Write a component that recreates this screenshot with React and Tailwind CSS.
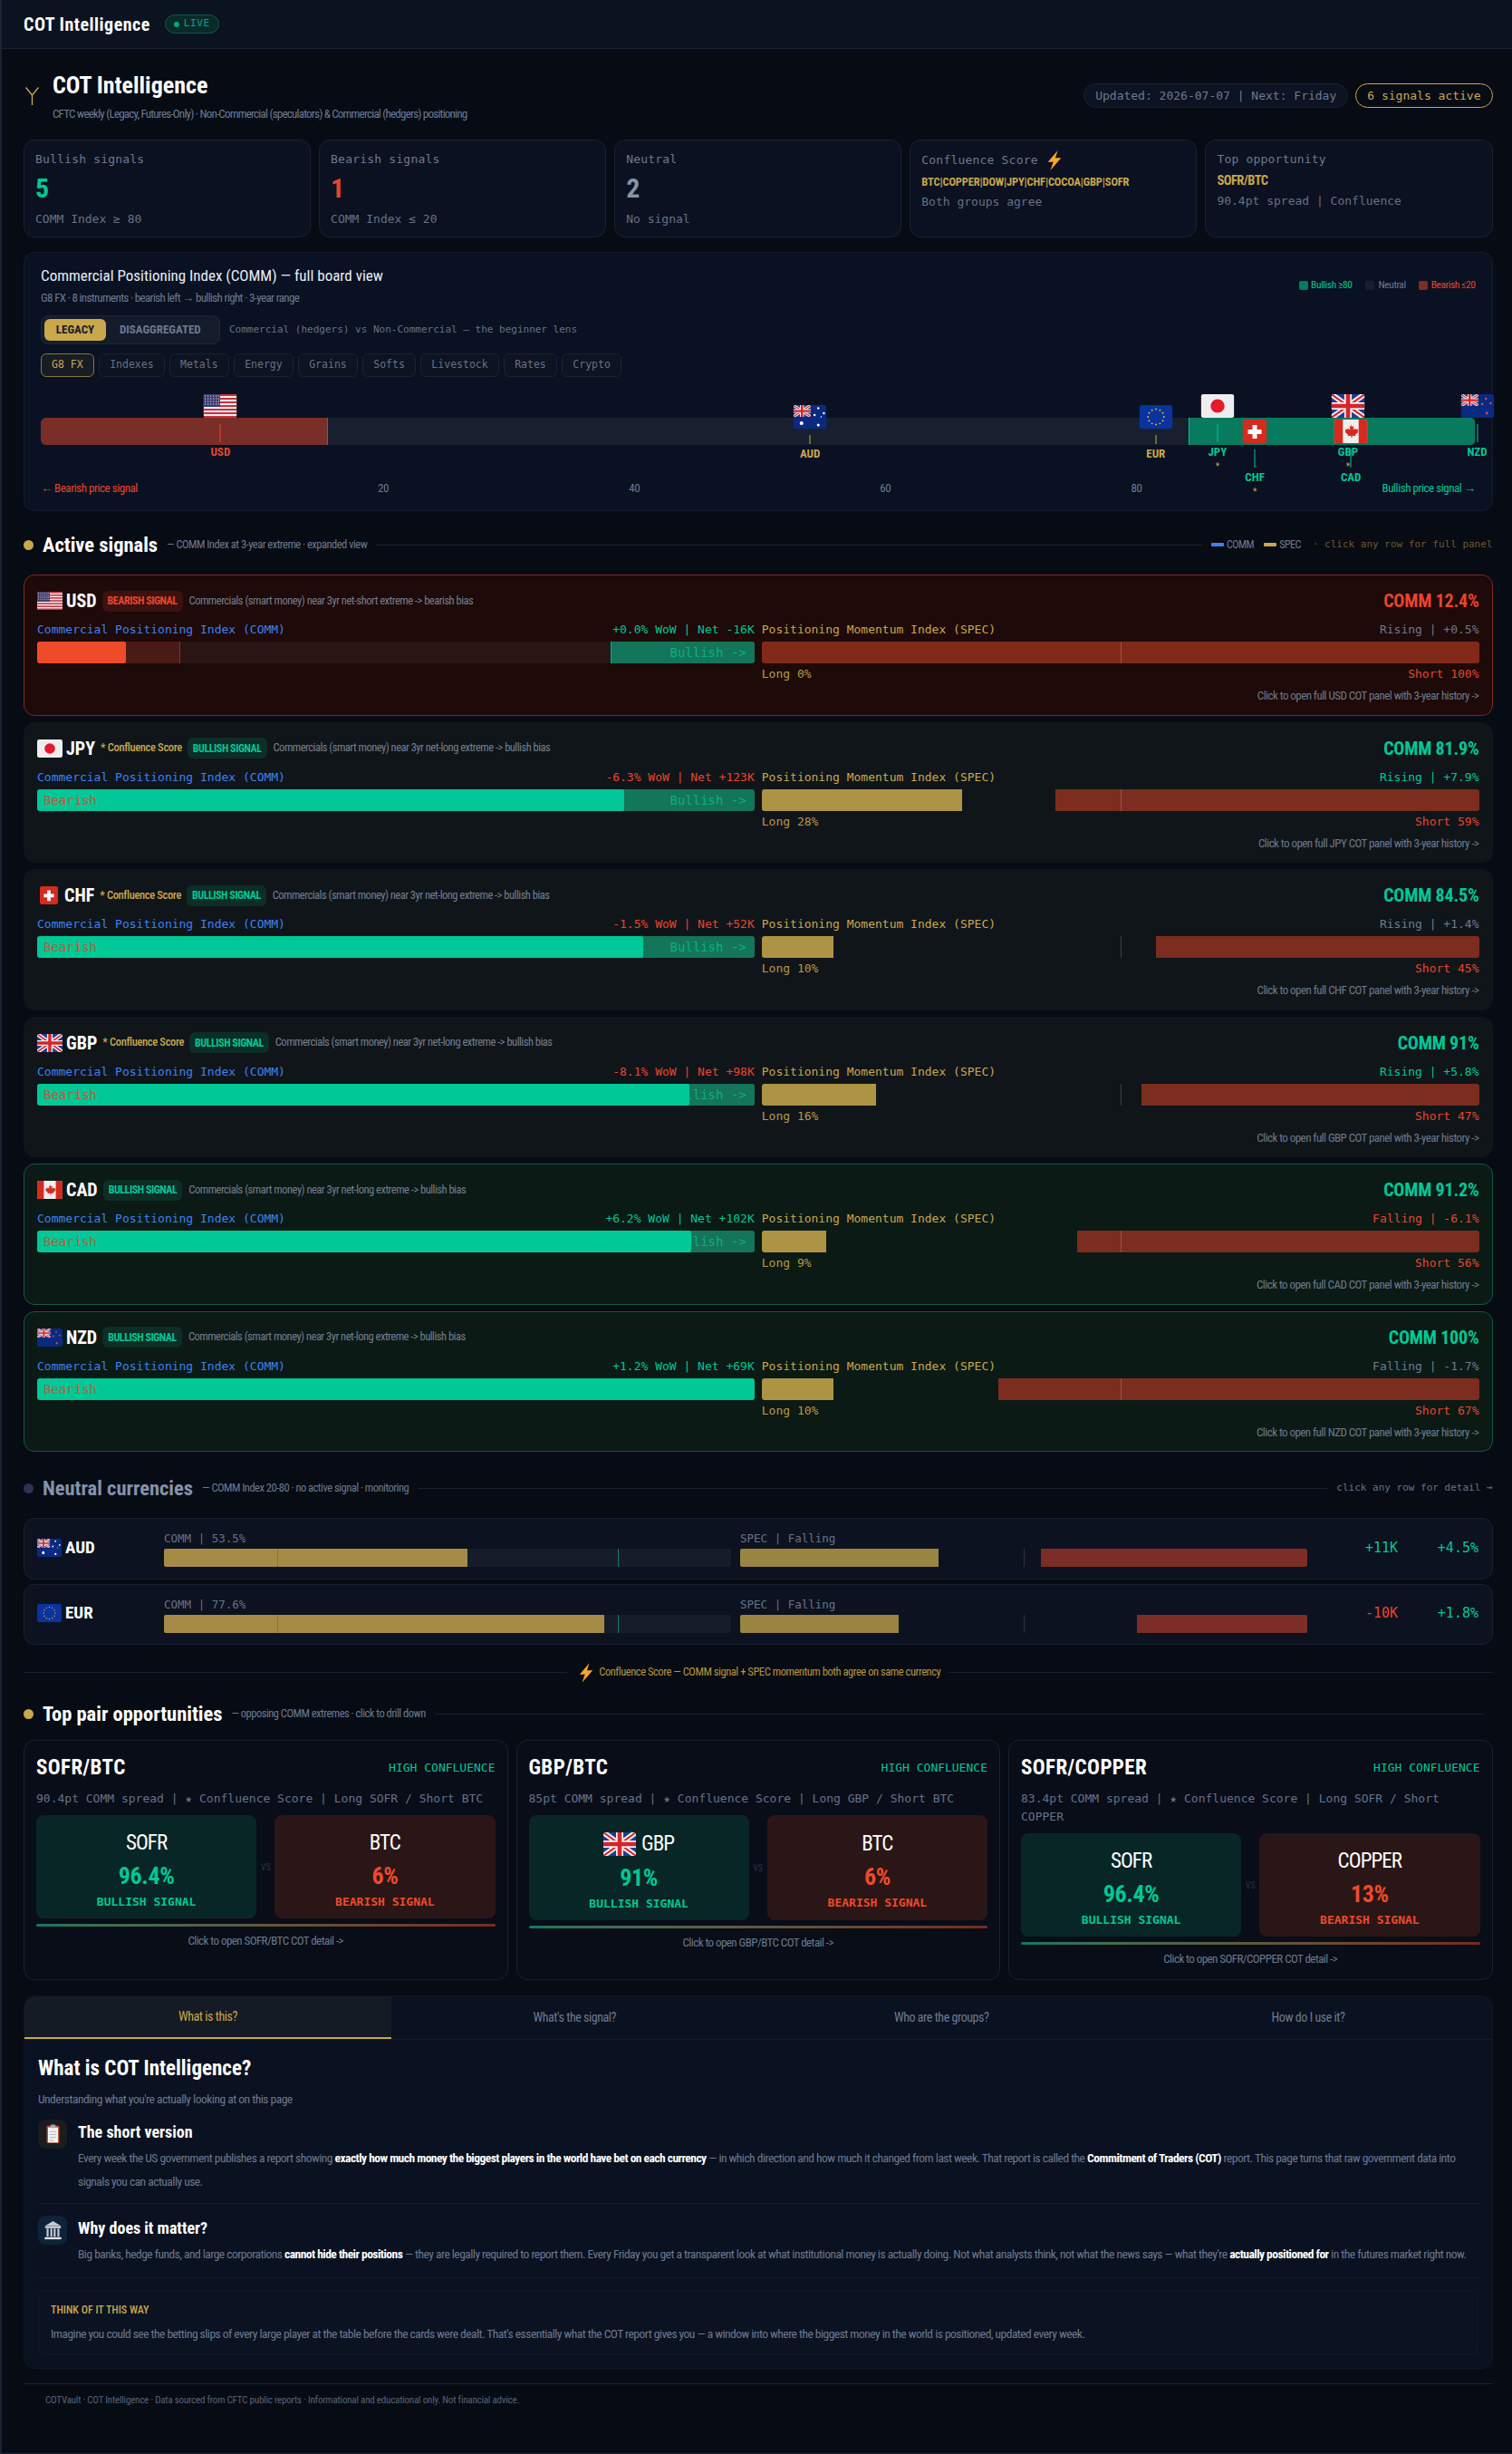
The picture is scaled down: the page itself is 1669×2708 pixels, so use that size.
import React from 'react';

// COT Intelligence dashboard
const MONO = "font-['DejaVu_Sans_Mono','Noto_Sans_Mono',monospace]";
const SANS = "font-['Roboto_Condensed','Liberation_Sans',sans-serif]";

const UnionJack = () => (
  <g>
    <rect width="36" height="26" fill="#1f3a93" />
    <path d="M0 0L36 26M36 0L0 26" stroke="#f0f0f0" strokeWidth="6" />
    <path d="M0 0L36 26M36 0L0 26" stroke="#d8232a" strokeWidth="2" />
    <path d="M18 0V26M0 13H36" stroke="#f0f0f0" strokeWidth="8" />
    <path d="M18 0V26M0 13H36" stroke="#d8232a" strokeWidth="4.5" />
  </g>
);

const Flag = ({ code, className = 'w-[37px] h-[26px]' }) => {
  if (code === 'CHF') {
    return (
      <svg viewBox="0 0 27 26" className={className} preserveAspectRatio="none">
        <rect width="27" height="26" rx="3" fill="#d52b1e" />
        <path d="M11 6h5v5h5v5h-5v5h-5v-5H6v-5h5z" fill="#fff" />
      </svg>
    );
  }
  return (
    <svg viewBox="0 0 36 26" className={className} preserveAspectRatio="none">
      <defs>
        <clipPath id={`clip-${code}`}>
          <rect width="36" height="26" rx="3" />
        </clipPath>
      </defs>
      <g clipPath={`url(#clip-${code})`}>
        {code === 'USD' && (
          <g>
            <rect width="36" height="26" fill="#eeeeee" />
            {[0, 4, 8, 12, 16, 20, 24].map(y => (
              <rect key={y} y={y} width="36" height="2" fill="#c8313e" />
            ))}
            <rect width="18" height="14" fill="#3c3b6e" />
            {[2, 5, 8, 11].map(y =>
              [2, 5, 8, 11, 14, 16.5].map(x => <circle key={`${x}-${y}`} cx={x} cy={y} r="0.7" fill="#cfcfe0" />)
            )}
          </g>
        )}
        {code === 'JPY' && (
          <g>
            <rect width="36" height="26" fill="#eeeeee" />
            <circle cx="18" cy="13" r="7.5" fill="#e8192c" />
          </g>
        )}
        {code === 'GBP' && <UnionJack />}
        {code === 'CAD' && (
          <g>
            <rect width="36" height="26" fill="#eeeeee" />
            <rect width="9.5" height="26" fill="#d52b1e" />
            <rect x="26.5" width="9.5" height="26" fill="#d52b1e" />
            <path d="M18 5l1.6 3 1.8-1-.8 4.4 2.4-2 .6 1.6 2.6-.4-.8 2.6 1 .6-3.6 3 .4 1.4-3.6-.4V20h-1.2v-2.2l-3.6.4.4-1.4-3.6-3 1-.6-.8-2.6 2.6.4.6-1.6 2.4 2-.8-4.4 1.8 1z" fill="#d52b1e" />
          </g>
        )}
        {(code === 'AUD' || code === 'NZD') && (
          <g>
            <rect width="36" height="26" fill="#0a2a82" />
            <svg x="0" y="0" width="19" height="13" viewBox="0 0 36 26" preserveAspectRatio="none">
              <UnionJack />
            </svg>
            {code === 'AUD'
              ? [[9, 20, 2], [27, 3.5, 1.2], [33, 9, 1.2], [23, 11, 1.2], [27, 22, 1.5], [30, 13, 0.7]].map(([x, y, r]) => (
                  <circle key={`${x}-${y}`} cx={x} cy={y} r={r} fill="#fff" />
                ))
              : [[27, 5, 1.2], [32, 10, 1.2], [23, 11, 1.2], [28, 21, 1.4]].map(([x, y, r]) => (
                  <circle key={`${x}-${y}`} cx={x} cy={y} r={r} fill="#d84a50" />
                ))}
          </g>
        )}
        {code === 'EUR' && (
          <g>
            <rect width="36" height="26" fill="#0a33a0" />
            {Array.from({ length: 12 }).map((_, i) => (
              <circle
                key={i}
                cx={18 + 8.5 * Math.cos((i * Math.PI) / 6)}
                cy={13 + 8.5 * Math.sin((i * Math.PI) / 6)}
                r="0.9"
                fill="#e8c21a"
              />
            ))}
          </g>
        )}
      </g>
    </svg>
  );
};

const Bolt = ({ className }) => (
  <svg viewBox="0 0 20 24" className={className}>
    <path d="M14 0L2 14h6.5L5 24 18 9h-7z" fill="#f9a62b" />
  </svg>
);

const Stat = ({ label, value, valueColor, sub }) => (
  <div className="h-[108px] rounded-xl border border-[#192131] bg-[#0b1120] px-[12px] pt-[11px]">
    <div className={`${MONO} h-[20px] text-[13px] leading-[20px] tracking-[0.2px] text-[#6d7a92]`}>{label}</div>
    <div className={`mt-[8px] h-[28px] text-[30px] font-bold leading-[28px] ${valueColor}`}>{value}</div>
    <div className={`${MONO} mt-[11px] h-[18px] text-[13px] leading-[18px] text-[#667288]`}>{sub}</div>
  </div>
);

const MARKERS = [
  { code: 'USD', pct: 12.4, top: 'mt-0', line: 'h-[20px]', color: 'text-[#e8452c]', bar: 'bg-[#e8452c]' },
  { code: 'AUD', pct: 53.5, top: 'mt-[12px]', line: 'h-[10px]', color: 'text-[#c9a84c]', bar: 'bg-[#c9a84c]' },
  { code: 'EUR', pct: 77.6, top: 'mt-[12px]', line: 'h-[10px]', color: 'text-[#c9a84c]', bar: 'bg-[#c9a84c]' },
  { code: 'JPY', pct: 81.9, top: 'mt-0', line: 'h-[20px]', color: 'text-[#00c896]', bar: 'bg-[#00c896]', star: true },
  { code: 'CHF', pct: 84.5, top: 'mt-[28px]', line: 'h-[20px]', color: 'text-[#00c896]', bar: 'bg-[#00c896]', star: true, narrow: true },
  { code: 'GBP', pct: 91, top: 'mt-0', line: 'h-[20px]', color: 'text-[#00c896]', bar: 'bg-[#00c896]', star: true },
  { code: 'CAD', pct: 91.2, top: 'mt-[28px]', line: 'h-[20px]', color: 'text-[#00c896]', bar: 'bg-[#00c896]' },
  { code: 'NZD', pct: 100, top: 'mt-0', line: 'h-[20px]', color: 'text-[#00c896]', bar: 'bg-[#00c896]' },
];

const BoardMarker = ({ m }) => (
  <div
    className={`absolute top-0 flex -translate-x-1/2 flex-col items-center ${m.top}`}
    style={{ left: `calc(${m.pct}% + 2px)` }}
  >
    <Flag code={m.code} className={m.narrow ? 'h-[26px] w-[27px]' : 'h-[26px] w-[37px]'} />
    <div className={`mt-[7px] w-px ${m.line} ${m.bar}`} />
    <div className={`mt-[3px] h-[16px] text-[13px] font-bold leading-[16px] ${m.color}`}>{m.code}</div>
    {m.star && <div className="h-[16px] text-[10px] leading-[16px] text-[#c9a84c]">*</div>}
  </div>
);

const SectionHeader = ({ dot, title, titleColor = 'text-white', sub, children }) => (
  <div className="flex h-[28px] items-center">
    <div className={`mr-[10px] h-[11px] w-[11px] shrink-0 rounded-full ${dot}`} />
    <div className={`whitespace-nowrap text-[22.5px] font-bold leading-[28px] ${titleColor}`}>{title}</div>
    <div className="ml-[10px] whitespace-nowrap text-[12.5px] tracking-[-0.5px] text-[#6d7a92]">{sub}</div>
    <div className="mx-[10px] h-px flex-1 bg-[#1a2233]" />
    {children}
  </div>
);

const SIGNALS = [
  { code: 'USD', kind: 'bear', comm: 12.4, wow: '+0.0% WoW | Net -16K', wowColor: 'text-[#00c896]', trend: 'Rising | +0.5%', trendColor: 'text-[#6d7a92]', long: 0, short: 100 },
  { code: 'JPY', kind: 'bull', comm: 81.9, wow: '-6.3% WoW | Net +123K', wowColor: 'text-[#e8452c]', trend: 'Rising | +7.9%', trendColor: 'text-[#00c896]', long: 28, short: 59, conf: true },
  { code: 'CHF', kind: 'bull', comm: 84.5, wow: '-1.5% WoW | Net +52K', wowColor: 'text-[#e8452c]', trend: 'Rising | +1.4%', trendColor: 'text-[#6d7a92]', long: 10, short: 45, conf: true, narrow: true },
  { code: 'GBP', kind: 'bull', comm: 91, wow: '-8.1% WoW | Net +98K', wowColor: 'text-[#e8452c]', trend: 'Rising | +5.8%', trendColor: 'text-[#00c896]', long: 16, short: 47, conf: true },
  { code: 'CAD', kind: 'green', comm: 91.2, wow: '+6.2% WoW | Net +102K', wowColor: 'text-[#00c896]', trend: 'Falling | -6.1%', trendColor: 'text-[#e8452c]', long: 9, short: 56 },
  { code: 'NZD', kind: 'green', comm: 100, wow: '+1.2% WoW | Net +69K', wowColor: 'text-[#00c896]', trend: 'Falling | -1.7%', trendColor: 'text-[#6d7a92]', long: 10, short: 67 },
];

const rowTone = {
  bear: 'bg-[#1e0a08] border-[#7a2a1e]',
  bull: 'bg-[#10151a] border-[#10151a]',
  green: 'bg-[#0b1a15] border-[#125a42]',
};

const SignalRow = ({ s }) => {
  const bear = s.kind === 'bear';
  return (
    <div className={`h-[155.5px] rounded-xl border px-[14px] pt-[16px] ${rowTone[s.kind]}`}>
      <div className="flex h-[24px] items-center">
        <Flag code={s.code} className={s.narrow ? 'ml-[3px] mr-[3px] h-[20px] w-[20px]' : 'h-[20px] w-[28px]'} />
        <div className="ml-[4px] text-[20px] font-bold text-white">{s.code}</div>
        {s.conf && (
          <div className="ml-[6px] text-[12.5px] font-medium tracking-[-0.35px] text-[#c9a84c]">* Confluence Score</div>
        )}
        <div
          className={`ml-[6px] flex h-[23px] items-center rounded-md px-[6px] text-[12px] font-bold tracking-[-0.45px] ${
            bear ? 'bg-[#3a1210] text-[#e8452c]' : 'bg-[#0d2d27] text-[#00c896]'
          }`}
        >
          {bear ? 'BEARISH SIGNAL' : 'BULLISH SIGNAL'}
        </div>
        <div className="ml-[7px] text-[12.5px] tracking-[-0.5px] text-[#757f90]">
          Commercials (smart money) near 3yr {bear ? 'net-short extreme -> bearish bias' : 'net-long extreme -> bullish bias'}
        </div>
        <div className={`ml-auto text-[20px] font-bold tracking-[-0.2px] ${bear ? 'text-[#e8452c]' : 'text-[#00c896]'}`}>
          COMM {s.comm}%
        </div>
      </div>
      <div className={`${MONO} mt-[11px] grid grid-cols-2 gap-[8px] text-[13px] leading-[18px]`}>
        <div>
          <div className="flex h-[18px] justify-between">
            <span className="text-[#3b82f6]">Commercial Positioning Index (COMM)</span>
            <span className={s.wowColor}>{s.wow}</span>
          </div>
          <div className={`relative mt-[4px] h-[24px] overflow-hidden rounded-[3px] ${bear ? 'bg-[#2a1414]' : 'bg-[#171d24]'}`}>
            <div className="absolute inset-y-0 left-0 w-[20%] border-r border-[#8a3020] bg-[#4a1a16]" />
            <div className="absolute inset-y-0 right-0 flex w-[20%] items-center justify-end border-l border-[#0fae82] bg-[#13755a] pr-[9px] text-[14px] text-[#0cb07f]">
              {'Bullish ->'}
            </div>
            <div
              className={`absolute inset-y-0 left-0 rounded-r-[2px] ${bear ? 'bg-[#ef4a2a]' : 'bg-[#00c896]'}`}
              style={{ width: `${s.comm}%` }}
            />
            <div className="absolute inset-y-0 left-[7px] flex items-center text-[14px] text-[#c8563a]">
              {!bear && 'Bearish'}
            </div>
          </div>
        </div>
        <div>
          <div className="flex h-[18px] justify-between">
            <span className="text-[#c9a84c]">Positioning Momentum Index (SPEC)</span>
            <span className={s.trendColor}>{s.trend}</span>
          </div>
          <div className="relative mt-[4px] h-[24px] overflow-hidden rounded-[3px]">
            <div className="absolute inset-y-0 left-0 bg-[#ad9444]" style={{ width: `${s.long}%` }} />
            <div className={`absolute inset-y-0 right-0 ${bear ? 'bg-[#822a1a]' : 'bg-[#7c2d20]'}`} style={{ width: `${s.short}%` }} />
            <div className="absolute inset-y-0 left-1/2 w-px bg-[#ffffff30]" />
          </div>
          <div className="mt-[4px] flex h-[16px] justify-between leading-[16px]">
            <span className="text-[#b89a45]">Long {s.long}%</span>
            <span className="text-[#e8452c]">Short {s.short}%</span>
          </div>
        </div>
      </div>
      <div className="mt-[8px] h-[16px] text-right text-[13px] leading-[16px] tracking-[-0.55px] text-[#6d7a8c]">
        {`Click to open full ${s.code} COT panel with 3-year history ->`}
      </div>
    </div>
  );
};

const NeutralRow = ({ code, comm, long, short, net, netColor, chg }) => (
  <div className="flex h-[67.5px] rounded-xl border border-[#182031] bg-[#0c1220] px-[14px]">
    <div className="flex w-[140px] items-center pb-[2px]">
      <Flag code={code} className="h-[20px] w-[27px]" />
      <div className="ml-[4px] text-[19px] font-bold text-white">{code}</div>
    </div>
    <div className="w-[626px] pt-[14px]">
      <div className={`${MONO} h-[16px] text-[12.5px] leading-[16px] text-[#667288]`}>COMM | {comm}%</div>
      <div className="relative mt-[3px] h-[20px] overflow-hidden rounded-[2px] bg-[#161c2a]">
        <div className="absolute inset-y-0 left-0 bg-[#a58b45]" style={{ width: `${comm}%` }} />
        <div className="absolute inset-y-0 left-[20%] w-px bg-[#b5602e]" />
        <div className="absolute inset-y-0 left-[80%] w-px bg-[#0c7f60]" />
      </div>
    </div>
    <div className="ml-[10px] w-[626px] pt-[14px]">
      <div className={`${MONO} h-[16px] text-[12.5px] leading-[16px] text-[#667288]`}>SPEC | Falling</div>
      <div className="relative mt-[3px] h-[20px] overflow-hidden rounded-[2px]">
        <div className="absolute inset-y-0 left-0 bg-[#9a8442]" style={{ width: `${long}%` }} />
        <div className="absolute inset-y-0 right-0 bg-[#7c2d26]" style={{ width: `${short}%` }} />
        <div className="absolute inset-y-0 left-1/2 w-px bg-[#2a3242]" />
      </div>
    </div>
    <div className={`${MONO} flex w-[100px] items-center justify-end pb-[2px] text-[15px] ${netColor}`}>{net}</div>
    <div className={`${MONO} flex w-[89px] items-center justify-end pb-[2px] text-[15px] text-[#00c896]`}>{chg}</div>
  </div>
);

const SideBox = ({ name, value, bull, flag }) => (
  <div className={`flex flex-col items-center justify-center rounded-lg py-[10px] ${bull ? 'bg-[#082625]' : 'bg-[#2a1616]'}`}>
    <div className={`mt-[3px] flex items-center text-[23px] leading-[36px] tracking-[-0.9px] text-white ${flag ? 'h-[38px]' : 'h-[36px]'}`}>
      {flag && <Flag code={flag} className="mr-[6px] h-[26px] w-[36px]" />}
      {name}
    </div>
    <div className={`mt-[1px] h-[34px] text-[26px] font-bold leading-[34px] tracking-[-0.4px] ${bull ? 'text-[#00c896]' : 'text-[#ef4a2a]'}`}>{value}</div>
    <div className={`${MONO} mt-[4px] h-[16px] text-[13px] font-bold leading-[16px] ${bull ? 'text-[#00c896]' : 'text-[#ef4a2a]'}`}>
      {bull ? 'BULLISH SIGNAL' : 'BEARISH SIGNAL'}
    </div>
  </div>
);

const PairCard = ({ pair, spread, a, av, b, bv, flag }) => (
  <div className="rounded-xl border border-[#192131] bg-[#080d18] px-[13px] pt-[16px]">
    <div className="flex h-[28px] items-center justify-between">
      <div className="text-[23px] font-bold tracking-[0.4px] text-white">{pair}</div>
      <div className={`${MONO} text-[13px] text-[#00c896]`}>HIGH CONFLUENCE</div>
    </div>
    <div className={`${MONO} mt-[10px] text-[13px] leading-[20px] text-[#667288]`}>
      {spread} COMM spread | ★ Confluence Score | Long {a} / Short {b}
    </div>
    <div className="mt-[8px] grid grid-cols-[1fr_20px_1fr]">
      <SideBox name={a} value={av} bull flag={flag} />
      <div className="flex items-center justify-center text-[10px] text-[#2a3347]">VS</div>
      <SideBox name={b} value={bv} />
    </div>
    <div className="mt-[6px] h-[3px] rounded-full bg-gradient-to-r from-[#0a7a5e] to-[#7a2a20]" />
    <div className="mt-[8px] h-[16px] text-center text-[13px] leading-[16px] tracking-[-0.55px] text-[#6d7a8c]">
      {`Click to open ${pair} COT detail ->`}
    </div>
  </div>
);

const B = ({ children }) => <b className="font-bold text-white">{children}</b>;

export default function App() {
  return (
    <div className={`${SANS} h-[2708px] overflow-hidden border-b border-l-2 border-[#1a2233] bg-[#070b14]`}>
      {/* top bar */}
      <div className="flex h-[54px] items-center border-b border-[#1a2233] bg-[#0b1220] pl-[24px]">
        <div className="text-[20px] font-bold tracking-[0.5px] text-white">COT Intelligence</div>
        <div className={`${MONO} ml-[16px] flex h-[21px] items-center gap-[5px] rounded-full border border-[#0c5a48] bg-[#0a2a28] px-[9px] text-[11px] tracking-[0.6px] text-[#00a97f]`}>
          <span className="h-[6px] w-[6px] rounded-full bg-[#00a97f]" />
          LIVE
        </div>
      </div>

      <div className="pl-[24px] pr-[21.5px]">
        {/* page title */}
        <div className="flex justify-between pt-[24px]">
          <div className="flex">
            <svg viewBox="0 0 15 20" className="ml-[2px] mr-[15px] mt-[18px] h-[20px] w-[15px]">
              <path d="M0.5 0.5L7.5 9M14.5 0.5L7.5 9V20" fill="none" stroke="#c9a84c" strokeWidth="1.3" />
            </svg>
            <div>
              <div className="h-[33px] text-[26px] font-bold leading-[33px] text-white">COT Intelligence</div>
              <div className="mt-[7px] h-[16px] text-[13px] leading-[16px] tracking-[-0.78px] text-[#6d7a92]">
                CFTC weekly (Legacy, Futures-Only) · Non-Commercial (speculators) &amp; Commercial (hedgers) positioning
              </div>
            </div>
          </div>
          <div className={`${MONO} mt-[14px] flex gap-[8px] text-[13px]`}>
            <div className="flex h-[27px] items-center rounded-full border border-[#1a2233] bg-[#0d1322] px-[12px] text-[#6d7a92]">
              Updated: 2026-07-07 | Next: Friday
            </div>
            <div className="flex h-[27px] items-center rounded-full border border-[#c9a84c] px-[12px] text-[#c9a84c]">
              6 signals active
            </div>
          </div>
        </div>

        {/* stat cards */}
        <div className="mt-[20px] grid grid-cols-5 gap-[9px]">
          <Stat label="Bullish signals" value="5" valueColor="text-[#00c896]" sub="COMM Index ≥ 80" />
          <Stat label="Bearish signals" value="1" valueColor="text-[#e8452c]" sub="COMM Index ≤ 20" />
          <Stat label="Neutral" value="2" valueColor="text-[#8592a8]" sub="No signal" />
          <div className="h-[108px] rounded-xl border border-[#192131] bg-[#0b1120] px-[12px] pt-[10px]">
            <div className={`${MONO} flex h-[24px] items-center text-[13px] tracking-[0.2px] text-[#6d7a92]`}>
              Confluence Score
              <Bolt className="ml-[8px] h-[22px] w-[20px]" />
            </div>
            <div className="mt-[2px] h-[20px] text-[12.5px] font-bold leading-[20px] tracking-[-0.15px] text-[#c9a84c]">
              BTC|COPPER|DOW|JPY|CHF|COCOA|GBP|SOFR
            </div>
            <div className={`${MONO} mt-[3px] h-[18px] text-[13px] leading-[18px] text-[#667288]`}>Both groups agree</div>
          </div>
          <div className="h-[108px] rounded-xl border border-[#192131] bg-[#0b1120] px-[12px] pt-[11px]">
            <div className={`${MONO} h-[20px] text-[13px] leading-[20px] tracking-[0.2px] text-[#6d7a92]`}>Top opportunity</div>
            <div className="mt-[4px] h-[20px] text-[14.5px] font-bold leading-[20px] tracking-[-0.5px] text-[#c9a84c]">SOFR/BTC</div>
            <div className={`${MONO} mt-[3px] h-[18px] text-[13px] leading-[18px] text-[#667288]`}>90.4pt spread | Confluence</div>
          </div>
        </div>

        {/* full board */}
        <div className="mt-[16px] h-[286px] rounded-xl border border-[#141c2c] bg-[#0a1122] px-[18px] pt-[16px]">
          <div className="flex justify-between">
            <div>
              <div className="h-[18px] text-[17px] leading-[18px] text-[#e8edf5]">
                Commercial Positioning Index (COMM) — full board view
              </div>
              <div className="mt-[8px] h-[16px] text-[13px] leading-[16px] tracking-[-0.65px] text-[#6d7a92]">
                G8 FX · 8 instruments · bearish left → bullish right · 3-year range
              </div>
            </div>
            <div className="mt-[11px] flex h-[18px] items-center text-[11.5px] tracking-[-0.4px]">
              <span className="h-[10px] w-[10px] rounded-[2px] bg-[#087a5e]" />
              <span className="ml-[3px] text-[#00c896]">Bullish ≥80</span>
              <span className="ml-[14px] h-[10px] w-[10px] rounded-[2px] bg-[#18202f]" />
              <span className="ml-[5px] text-[#6d7a92]">Neutral</span>
              <span className="ml-[14px] h-[10px] w-[10px] rounded-[2px] bg-[#7a2e28]" />
              <span className="ml-[4px] text-[#e8452c]">Bearish ≤20</span>
            </div>
          </div>
          <div className="mt-[11px] flex items-center">
            <div className="flex h-[32px] w-[198px] items-center rounded-lg border border-[#1f2838] bg-[#141b2b] pl-[3px] text-[13px] font-bold">
              <span className="flex h-[24px] w-[68px] items-center justify-center rounded-md bg-[#c9a84c] text-[#141b2b]">LEGACY</span>
              <span className="ml-[15px] text-[#6d7a92]">DISAGGREGATED</span>
            </div>
            <div className={`${MONO} ml-[10px] text-[11px] text-[#667288]`}>
              Commercial (hedgers) vs Non-Commercial — the beginner lens
            </div>
          </div>
          <div className={`${MONO} mt-[10px] flex gap-[5.5px] text-[11.5px] text-[#667288]`}>
            {['G8 FX', 'Indexes', 'Metals', 'Energy', 'Grains', 'Softs', 'Livestock', 'Rates', 'Crypto'].map((t, i) => (
              <div
                key={t}
                className={`flex h-[26px] items-center rounded-md border px-[11px] ${
                  i === 0 ? 'border-[#8a7638] bg-[#171c25] text-[#c9a84c]' : 'border-[#1a2233] bg-[#0d1320]'
                }`}
              >
                {t}
              </div>
            ))}
          </div>
          <div className="relative mt-[19px] h-[95px]">
            <div className="absolute inset-x-0 top-[26px] flex h-[30px] overflow-hidden rounded-md bg-[#18202f]">
              <div className="w-[20%] border-r border-[#c2402c] bg-[#7a2e28]" />
              <div className="ml-[60%] w-[20%] border-l border-[#00c896] bg-[#087a5e]" />
            </div>
            {MARKERS.map(m => (
              <BoardMarker key={m.code} m={m} />
            ))}
          </div>
          <div className="mt-[1px] flex h-[16px] items-center justify-between text-[13px] tracking-[-0.45px] text-[#6d7a92]">
            <span className="text-[#e8452c]">← Bearish price signal</span>
            <span>20</span>
            <span>40</span>
            <span>60</span>
            <span>80</span>
            <span className="text-[#00c896]">Bullish price signal →</span>
          </div>
        </div>

        {/* active signals */}
        <div className="mt-[23px]">
          <SectionHeader dot="bg-[#c9a84c]" title="Active signals" sub="— COMM Index at 3-year extreme · expanded view">
            <div className="flex items-center text-[12px] tracking-[-0.5px] text-[#6d7a92]">
              <span className="h-[4px] w-[14px] rounded-[1px] bg-[#3b82f6]" />
              <span className="ml-[3px]">COMM</span>
              <span className="ml-[11px] h-[4px] w-[14px] rounded-[1px] bg-[#c9a84c]" />
              <span className="ml-[3px]">SPEC</span>
              <span className={`${MONO} ml-[13px] text-[11px] tracking-normal text-[#6b5a2e]`}>· click any row for full panel</span>
            </div>
          </SectionHeader>
        </div>
        <div className="mt-[19px] flex flex-col gap-[7px]">
          {SIGNALS.map(s => (
            <SignalRow key={s.code} s={s} />
          ))}
        </div>

        {/* neutral */}
        <div className="mt-[26px]">
          <SectionHeader
            dot="bg-[#2a3450]"
            title="Neutral currencies"
            titleColor="text-[#8592a8]"
            sub="— COMM Index 20-80 · no active signal · monitoring"
          >
            <span className={`${MONO} text-[11px] text-[#667288]`}>click any row for detail →</span>
          </SectionHeader>
        </div>
        <div className="mt-[19px] flex flex-col gap-[5px]">
          <NeutralRow code="AUD" comm={53.5} long={35} short={47} net="+11K" netColor="text-[#00c896]" chg="+4.5%" />
          <NeutralRow code="EUR" comm={77.6} long={28} short={30} net="-10K" netColor="text-[#e8452c]" chg="+1.8%" />
        </div>

        {/* confluence note */}
        <div className="mt-[18.5px] flex h-[24px] items-center">
          <div className="h-px flex-1 bg-[#1a2233]" />
          <Bolt className="ml-[12px] h-[22px] w-[18px]" />
          <span className="ml-[5px] text-[12.5px] tracking-[-0.45px] text-[#b8963c]">
            Confluence Score — COMM signal + SPEC momentum both agree on same currency
          </span>
          <div className="ml-[9px] h-px flex-1 bg-[#1a2233]" />
        </div>

        {/* pairs */}
        <div className="mt-[19.5px]">
          <SectionHeader dot="bg-[#c9a84c]" title="Top pair opportunities" sub="— opposing COMM extremes · click to drill down" />
        </div>
        <div className="mt-[15px] grid h-[265px] grid-cols-3 gap-[9px]">
          <PairCard pair="SOFR/BTC" spread="90.4pt" a="SOFR" av="96.4%" b="BTC" bv="6%" />
          <PairCard pair="GBP/BTC" spread="85pt" a="GBP" av="91%" b="BTC" bv="6%" flag="GBP" />
          <PairCard pair="SOFR/COPPER" spread="83.4pt" a="SOFR" av="96.4%" b="COPPER" bv="13%" />
        </div>

        {/* explainer */}
        <div className="mt-[17px] h-[412px] rounded-xl border border-[#0e1524] bg-[#0a1120]">
          <div className="grid h-[48px] grid-cols-4 border-b border-[#141c2c] text-[14px] tracking-[-0.45px] text-[#6d7a92]">
            <div className="flex items-center justify-center rounded-tl-xl border-b-2 border-[#c9a84c] bg-[#151b25] text-[#c9a84c]">What is this?</div>
            <div className="flex items-center justify-center">What's the signal?</div>
            <div className="flex items-center justify-center">Who are the groups?</div>
            <div className="flex items-center justify-center">How do I use it?</div>
          </div>
          <div className="px-[15px] pt-[17px]">
            <div className="h-[30px] text-[23px] font-bold leading-[30px] text-white">What is COT Intelligence?</div>
            <div className="mt-[10px] h-[16px] text-[13.5px] leading-[16px] tracking-[-0.5px] text-[#6d7a92]">
              Understanding what you're actually looking at on this page
            </div>

            <div className="mt-[15px] flex gap-[12px] border-b border-[#141c2c] pb-[11px]">
              <div className="flex h-[32px] w-[32px] shrink-0 items-center justify-center rounded-lg bg-[#1a1c20]">
                <svg viewBox="0 0 16 24" className="h-[22px] w-[17px]">
                  <rect x="0.5" y="2" width="15" height="21" rx="1.5" fill="#b5573a" />
                  <rect x="2" y="4" width="12" height="18" fill="#f1f2f2" />
                  <rect x="5" y="0.5" width="6" height="4" rx="1" fill="#a0a7ad" />
                  <path d="M4 9h8M4 12.5h8M4 16h8M4 19.5h5" stroke="#a8b2ba" strokeWidth="1" />
                </svg>
              </div>
              <div className="flex-1">
                <div className="mt-[4px] h-[20px] text-[18px] font-bold leading-[20px] text-white">The short version</div>
                <div className="mt-[6px] text-[13.5px] leading-[25.5px] tracking-[-0.52px] text-[#6d7a92]">
                  Every week the US government publishes a report showing{' '}
                  <B>exactly how much money the biggest players in the world have bet on each currency</B> — in which
                  direction and how much it changed from last week. That report is called the{' '}
                  <B>Commitment of Traders (COT)</B> report. This page turns that raw government data into
                  <br />
                  signals you can actually use.
                </div>
              </div>
            </div>

            <div className="mt-[13px] flex gap-[12px] border-b border-[#141c2c] pb-[12.5px]">
              <div className="flex h-[32px] w-[32px] shrink-0 items-center justify-center rounded-lg bg-[#0f2338]">
                <svg viewBox="0 0 22 24" className="h-[22px] w-[21px]">
                  <path d="M11 1L21 7H1z" fill="#c3ccd4" />
                  <rect x="1.5" y="7.5" width="19" height="2" fill="#dfe5ea" />
                  <path d="M4.5 10v10M9 10v10M13 10v10M17.5 10v10" stroke="#c3ccd4" strokeWidth="2.4" />
                  <rect x="1" y="20.5" width="20" height="2.5" fill="#dfe5ea" />
                </svg>
              </div>
              <div className="flex-1">
                <div className="mt-[3.5px] h-[20px] text-[18px] font-bold leading-[20px] text-white">Why does it matter?</div>
                <div className="mt-[6.5px] text-[13.5px] leading-[25.5px] tracking-[-0.52px] text-[#6d7a92]">
                  Big banks, hedge funds, and large corporations <B>cannot hide their positions</B> — they are legally
                  required to report them. Every Friday you get a transparent look at what institutional money is actually
                  doing. Not what analysts think, not what the news says — what they're <B>actually positioned for</B> in the
                  futures market right now.
                </div>
              </div>
            </div>

            <div className="mt-[13px] h-[71px] rounded-lg border border-[#121a2a] bg-[#0b1222] pl-[13px] pt-[13px]">
              <div className="h-[16px] text-[12px] font-medium leading-[16px] text-[#c9a84c]">THINK OF IT THIS WAY</div>
              <div className="mt-[10px] h-[16px] text-[13.5px] leading-[16px] tracking-[-0.52px] text-[#6d7a92]">
                Imagine you could see the betting slips of every large player at the table before the cards were dealt.
                That's essentially what the COT report gives you — a window into where the biggest money in the world is
                positioned, updated every week.
              </div>
            </div>
          </div>
        </div>

        {/* footer */}
        <div className="mt-[16px] border-t border-[#1a2233] pl-[24px] pt-[10px]">
          <div className="h-[16px] text-[11px] leading-[16px] tracking-[-0.2px] text-[#5a6478]">
            COTVault · COT Intelligence · Data sourced from CFTC public reports · Informational and educational only. Not financial advice.
          </div>
        </div>
      </div>
    </div>
  );
}
